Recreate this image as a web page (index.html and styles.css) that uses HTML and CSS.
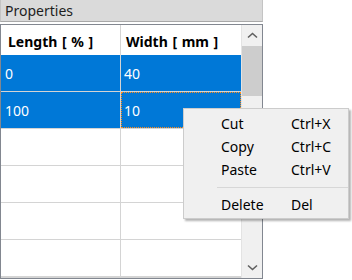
FILE: index.html
```html
<!DOCTYPE html>
<html lang="en">
<head>
  <meta charset="UTF-8">
  <title>Properties</title>
  <link rel="stylesheet" href="styles.css">
</head>
<body>

  <div class="panel">
    <div class="panel-title">Properties</div>
    <div class="frame">
      <div class="table">
        <div class="row head">
          <div class="cell">Length [ % ]</div>
          <div class="cell">Width [ mm ]</div>
        </div>
        <div class="row selected">
          <div class="cell">0</div>
          <div class="cell">40</div>
        </div>
        <div class="row selected">
          <div class="cell">100</div>
          <div class="cell focus">10</div>
        </div>
        <div class="row"><div class="cell"></div><div class="cell"></div></div>
        <div class="row"><div class="cell"></div><div class="cell"></div></div>
        <div class="row"><div class="cell"></div><div class="cell"></div></div>
        <div class="row"><div class="cell"></div><div class="cell"></div></div>
      </div>
      <div class="scrollbar">
        <div class="arrow">
          <svg width="11" height="7" viewBox="0 0 11 7"><polyline points="1,5.5 5.5,1.5 10,5.5" fill="none" stroke="#606060" stroke-width="1.6"/></svg>
        </div>
        <div class="thumb"></div>
        <div class="track"></div>
        <div class="arrow">
          <svg width="11" height="7" viewBox="0 0 11 7"><polyline points="1,1.5 5.5,5.5 10,1.5" fill="none" stroke="#606060" stroke-width="1.6"/></svg>
        </div>
      </div>
    </div>
  </div>

  <div class="menu">
    <div class="item"><span>Cut</span><span>Ctrl+X</span></div>
    <div class="item"><span>Copy</span><span>Ctrl+C</span></div>
    <div class="item"><span>Paste</span><span>Ctrl+V</span></div>
    <div class="sep"></div>
    <div class="item"><span>Delete</span><span>Del</span></div>
  </div>

</body>
</html>
```

FILE: styles.css
```css
body {
  margin: 0;
  background: #fff;
  font-family: 'Noto Sans', 'Open Sans', sans-serif;
  font-size: 14px;
  color: #000;
  width: 352px;
  height: 280px;
  overflow: hidden;
}

.panel {
  width: 263px;
}

.panel-title {
  height: 21px;
  line-height: 21px;
  background: #dadada;
  border: 1px solid #c4c4c4;
  border-bottom-color: #a8a8a8;
  border-top: none;
  padding-left: 4px;
  color: #1e1e1e;
}

.frame {
  margin-top: 2px;
  height: 253px;
  border: 1px solid #828790;
  display: flex;
  overflow: hidden;
}

.table {
  width: 240px;
  background: #d4d4d4;
}

.row {
  display: grid;
  grid-template-columns: 119px 120px;
  column-gap: 1px;
  height: 36px;
  margin-bottom: 1px;
}

.cell {
  background: #fff;
  display: flex;
  align-items: center;
  padding-left: 4px;
}

.head {
  height: 30px;
  margin-bottom: 0;
}

.head .cell {
  font-weight: bold;
  padding-left: 7px;
  padding-top: 2px;
  word-spacing: 1px;
}

.head .cell + .cell {
  padding-left: 5px;
}

.selected .cell {
  background: #0078d7;
  color: #fff;
}

.selected .cell + .cell {
  padding-left: 3px;
}

.focus {
  outline: 1px dotted #ff8c1a;
  outline-offset: -1px;
}

.scrollbar {
  width: 20px;
  border-left: 1px solid #e3e3e3;
  background: #f0f0f0;
  display: flex;
  flex-direction: column;
}

.arrow {
  height: 21px;
  display: flex;
  align-items: center;
  justify-content: center;
}

.thumb {
  height: 50px;
  background: #cdcdcd;
}

.track {
  flex: 1;
}

.menu {
  position: absolute;
  left: 183px;
  top: 108px;
  width: 164px;
  padding: 3px 0 2px;
  background: #f0f0f0;
  border: 1px solid #cccccc;
  box-shadow: 2px 2px 2px rgba(0,0,0,0.3);
}

.item {
  display: grid;
  grid-template-columns: 70px auto;
  padding-left: 37px;
  height: 23px;
  line-height: 23px;
}

.sep {
  height: 1px;
  background: #d7d7d7;
  margin: 6px 0 5px 33px;
}
```
